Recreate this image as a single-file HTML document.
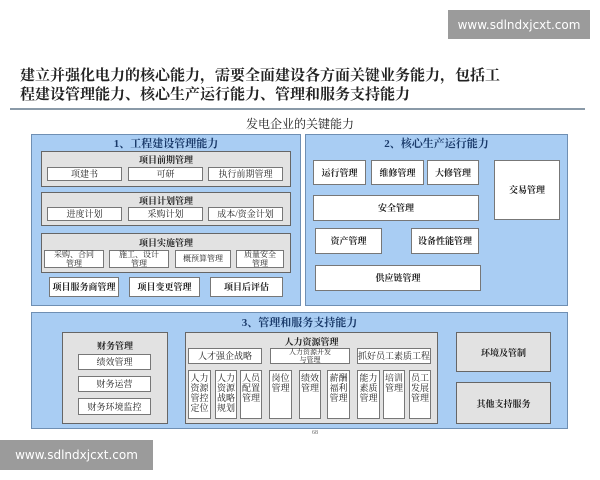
<!DOCTYPE html><html><head><meta charset="utf-8"><style>
*{margin:0;padding:0;box-sizing:border-box}
body{width:600px;height:480px;background:#fff;position:relative;overflow:hidden;font-family:"Liberation Serif","Noto Serif CJK SC",serif;color:#222}
.a{position:absolute}
.p{position:absolute;background:#a9cdf3;border:1.5px solid #6f8fb3}
.g{position:absolute;background:#e2e2e2;border:1px solid #666}
.w{position:absolute;background:#fff;border:1px solid #777;display:flex;align-items:center;justify-content:center;text-align:center;font-size:9px;line-height:10px}
.b{font-weight:bold}
.t{position:absolute;left:0;right:0;text-align:center;font-weight:bold}
.c{font-size:9px;line-height:10px;padding-top:2px;align-items:flex-start}
.wm{position:absolute;background:#9b9b9b;color:#fff;font-family:"DejaVu Sans",sans-serif;font-size:12px;display:flex;align-items:center;justify-content:center}
</style></head><body>
<div class="wm" style="left:448px;top:10px;width:142px;height:29px">www.sdlndxjcxt.com</div>
<div class="a b" style="left:20px;top:67px;font-size:15px;line-height:19px">建立并强化电力的核心能力，需要全面建设各方面关键业务能力，包括工<br>程建设管理能力、核心生产运行能力、管理和服务支持能力</div>
<div class="a" style="left:10px;top:108px;width:575px;height:2px;background:#8a9aa8"></div>
<div class="a" style="left:0;width:600px;top:115px;text-align:center;font-size:12px">发电企业的关键能力</div>

<div class="p" style="left:31px;top:134px;width:270px;height:172px">
<div class="t" style="top:3px;font-size:11px;line-height:12px;color:#1a3a6a">1、工程建设管理能力</div></div>
<div class="g" style="left:41px;top:151px;width:250px;height:36px"><div class="t" style="top:1px;font-size:9px">项目前期管理</div></div>
<div class="w" style="left:47px;top:167px;width:75px;height:14px">项建书</div>
<div class="w" style="left:128px;top:167px;width:75px;height:14px">可研</div>
<div class="w" style="left:208px;top:167px;width:75px;height:14px">执行前期管理</div>
<div class="g" style="left:41px;top:192px;width:250px;height:34px"><div class="t" style="top:1px;font-size:9px">项目计划管理</div></div>
<div class="w" style="left:47px;top:207px;width:75px;height:14px">进度计划</div>
<div class="w" style="left:128px;top:207px;width:75px;height:14px">采购计划</div>
<div class="w" style="left:208px;top:207px;width:75px;height:14px">成本/资金计划</div>
<div class="g" style="left:41px;top:233px;width:250px;height:40px"><div class="t" style="top:2px;font-size:9px">项目实施管理</div></div>
<div class="w" style="left:44px;top:250px;width:60px;height:18px;font-size:8px;line-height:9px">采购、合同<br>管理</div>
<div class="w" style="left:109px;top:250px;width:60px;height:18px;font-size:8px;line-height:9px">施工、设计<br>管理</div>
<div class="w" style="left:175px;top:250px;width:56px;height:18px;font-size:8px">概预算管理</div>
<div class="w" style="left:236px;top:250px;width:48px;height:18px;font-size:8px;line-height:9px">质量安全<br>管理</div>
<div class="w b" style="left:49px;top:277px;width:70px;height:20px">项目服务商管理</div>
<div class="w b" style="left:129px;top:277px;width:71px;height:20px">项目变更管理</div>
<div class="w b" style="left:210px;top:277px;width:73px;height:20px">项目后评估</div>

<div class="p" style="left:305px;top:134px;width:263px;height:172px">
<div class="t" style="top:3px;font-size:11px;line-height:12px;color:#1a3a6a">2、核心生产运行能力</div></div>
<div class="w b" style="left:313px;top:160px;width:53px;height:25px">运行管理</div>
<div class="w b" style="left:371px;top:160px;width:53px;height:25px">维修管理</div>
<div class="w b" style="left:427px;top:160px;width:52px;height:25px">大修管理</div>
<div class="w b" style="left:494px;top:160px;width:66px;height:60px">交易管理</div>
<div class="w b" style="left:313px;top:195px;width:166px;height:26px">安全管理</div>
<div class="w b" style="left:315px;top:228px;width:67px;height:26px">资产管理</div>
<div class="w b" style="left:411px;top:228px;width:68px;height:26px">设备性能管理</div>
<div class="w b" style="left:315px;top:265px;width:166px;height:26px">供应链管理</div>

<div class="p" style="left:31px;top:312px;width:537px;height:117px">
<div class="t" style="top:4px;font-size:11px;line-height:12px;color:#1a3a6a">3、管理和服务支持能力</div></div>
<div class="g" style="left:62px;top:332px;width:106px;height:92px"><div class="t" style="top:6px;font-size:9px">财务管理</div></div>
<div class="w" style="left:78px;top:354px;width:73px;height:16px">绩效管理</div>
<div class="w" style="left:78px;top:376px;width:73px;height:16px">财务运营</div>
<div class="w" style="left:78px;top:398px;width:73px;height:17px">财务环境监控</div>
<div class="g" style="left:185px;top:332px;width:253px;height:92px"><div class="t" style="top:2px;font-size:9px">人力资源管理</div></div>
<div class="w" style="left:188px;top:348px;width:74px;height:16px">人才强企战略</div>
<div class="w" style="left:270px;top:348px;width:80px;height:16px;font-size:7px;line-height:8px">人力资源开发<br>与管理</div>
<div class="w" style="left:357px;top:348px;width:74px;height:16px">抓好员工素质工程</div>
<div class="w c" style="left:188px;top:370px;width:23px;height:49px">人力资源管控定位</div>
<div class="w c" style="left:215px;top:370px;width:22px;height:49px">人力资源战略规划</div>
<div class="w c" style="left:240px;top:370px;width:22px;height:49px">人员配置管理</div>
<div class="w c" style="left:269px;top:370px;width:23px;height:49px">岗位管理</div>
<div class="w c" style="left:299px;top:370px;width:22px;height:49px">绩效管理</div>
<div class="w c" style="left:327px;top:370px;width:23px;height:49px">薪酬福利管理</div>
<div class="w c" style="left:357px;top:370px;width:23px;height:49px">能力素质管理</div>
<div class="w c" style="left:383px;top:370px;width:22px;height:49px">培训管理</div>
<div class="w c" style="left:409px;top:370px;width:22px;height:49px">员工发展管理</div>
<div class="g b" style="left:456px;top:332px;width:95px;height:40px;display:flex;align-items:center;justify-content:center;font-size:9px">环境及管制</div>
<div class="g b" style="left:456px;top:382px;width:95px;height:42px;display:flex;align-items:center;justify-content:center;font-size:9px">其他支持服务</div>
<div class="a" style="left:312px;top:430px;font-size:6px;color:#666">68</div>
<div class="wm" style="left:0;top:440px;width:153px;height:30px">www.sdlndxjcxt.com</div>
</body></html>
